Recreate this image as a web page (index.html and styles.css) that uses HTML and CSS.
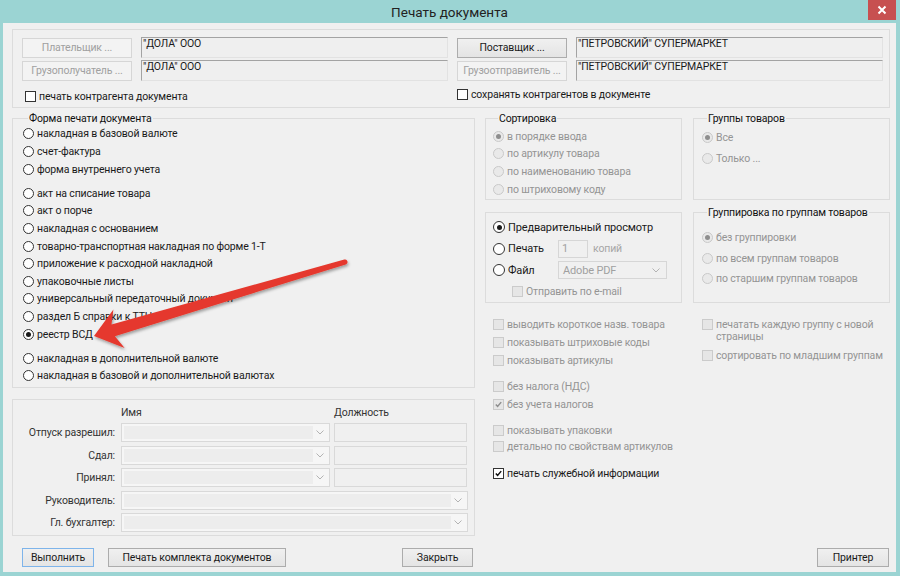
FILE: index.html
```html
<!DOCTYPE html>
<html lang="ru">
<head>
<meta charset="utf-8">
<title>Печать документа</title>
<link rel="stylesheet" href="styles.css">
</head>
<body>
<div class="window">
  <div class="titlebar">
    <span></span>
    <span class="title">Печать документа</span>
    <span class="close"><svg width="10" height="10" viewBox="0 0 10 10"><path d="M1.5 1.5 8.5 8.5M8.5 1.5 1.5 8.5"/></svg></span>
  </div>

  <div class="client">
    <div class="parties">
      <button class="btn" disabled>Плательщик ...</button>
      <div class="field">"ДОЛА" ООО</div>
      <button class="btn">Поставщик ...</button>
      <div class="field">"ПЕТРОВСКИЙ" СУПЕРМАРКЕТ</div>
      <button class="btn" disabled>Грузополучатель ...</button>
      <div class="field">"ДОЛА" ООО</div>
      <button class="btn" disabled>Грузоотправитель ...</button>
      <div class="field">"ПЕТРОВСКИЙ" СУПЕРМАРКЕТ</div>
      <label class="chk party-left"><span class="cb"></span>печать контрагента документа</label>
      <label class="chk party-right"><span class="cb"></span>сохранять контрагентов в документе</label>
    </div>

    <div class="main">
      <div class="left">
        <fieldset class="form">
          <legend>Форма печати документа</legend>
          <label class="row"><span class="rb"></span>накладная в базовой валюте</label>
          <label class="row"><span class="rb"></span>счет-фактура</label>
          <label class="row"><span class="rb"></span>форма внутреннего учета</label>
          <label class="row sep"><span class="rb"></span>акт на списание товара</label>
          <label class="row"><span class="rb"></span>акт о порче</label>
          <label class="row"><span class="rb"></span>накладная с основанием</label>
          <label class="row"><span class="rb"></span>товарно-транспортная накладная по форме 1-Т</label>
          <label class="row"><span class="rb"></span>приложение к расходной накладной</label>
          <label class="row"><span class="rb"></span>упаковочные листы</label>
          <label class="row"><span class="rb"></span>универсальный передаточный документ</label>
          <label class="row"><span class="rb"></span>раздел Б справки к ТТН</label>
          <label class="row"><span class="rb on"></span>реестр ВСД</label>
          <label class="row sep"><span class="rb"></span>накладная в дополнительной валюте</label>
          <label class="row"><span class="rb"></span>накладная в базовой и дополнительной валютах</label>
        </fieldset>

        <div class="people">
          <span></span><span class="head">Имя</span><span class="head">Должность</span>
          <span class="lbl">Отпуск разрешил:</span>
          <div class="combo"><span class="combo-in"></span><svg class="chev" viewBox="0 0 8 5"><path d="M.5 .5 4 4 7.5 .5"/></svg></div>
          <div class="edit"></div>
          <span class="lbl">Сдал:</span>
          <div class="combo"><span class="combo-in"></span><svg class="chev" viewBox="0 0 8 5"><path d="M.5 .5 4 4 7.5 .5"/></svg></div>
          <div class="edit"></div>
          <span class="lbl">Принял:</span>
          <div class="combo"><span class="combo-in"></span><svg class="chev" viewBox="0 0 8 5"><path d="M.5 .5 4 4 7.5 .5"/></svg></div>
          <div class="edit"></div>
          <span class="lbl">Руководитель:</span>
          <div class="combo wide"><span class="combo-in"></span><svg class="chev" viewBox="0 0 8 5"><path d="M.5 .5 4 4 7.5 .5"/></svg></div>
          <span class="lbl">Гл. бухгалтер:</span>
          <div class="combo wide"><span class="combo-in"></span><svg class="chev" viewBox="0 0 8 5"><path d="M.5 .5 4 4 7.5 .5"/></svg></div>
        </div>
      </div>

      <div class="right">
        <div class="pair">
          <fieldset class="sort dis">
            <legend>Сортировка</legend>
            <label class="row"><span class="rb on"></span>в порядке ввода</label>
            <label class="row"><span class="rb"></span>по артикулу товара</label>
            <label class="row"><span class="rb"></span>по наименованию товара</label>
            <label class="row"><span class="rb"></span>по штриховому коду</label>
          </fieldset>
          <fieldset class="groups dis">
            <legend>Группы товаров</legend>
            <label class="row"><span class="rb on"></span>Все</label>
            <label class="row"><span class="rb"></span>Только ...</label>
          </fieldset>
        </div>

        <div class="pair pair-out">
          <div class="output">
            <label class="row"><span class="rb on"></span>Предварительный просмотр</label>
            <div class="row"><label class="opt"><span class="rb"></span>Печать</label><span class="num">1</span><span class="dim">копий</span></div>
            <div class="row"><label class="opt"><span class="rb"></span>Файл</label><span class="select">Adobe PDF<svg class="chev" viewBox="0 0 8 5"><path d="M.5 .5 4 4 7.5 .5"/></svg></span></div>
            <label class="row dis mail"><span class="cb"></span>Отправить по e-mail</label>
          </div>
          <fieldset class="grouping dis">
            <legend>Группировка по группам товаров</legend>
            <label class="row"><span class="rb on"></span>без группировки</label>
            <label class="row"><span class="rb"></span>по всем группам товаров</label>
            <label class="row"><span class="rb"></span>по старшим группам товаров</label>
          </fieldset>
        </div>

        <div class="pair flags">
          <div class="flag-col dis">
            <label class="flag"><span class="cb"></span>выводить короткое назв. товара</label>
            <label class="flag"><span class="cb"></span>показывать штриховые коды</label>
            <label class="flag"><span class="cb"></span>показывать артикулы</label>
            <label class="flag gap8"><span class="cb"></span>без налога (НДС)</label>
            <label class="flag"><span class="cb"><svg viewBox="0 0 11 11"><path d="M2.2 5.6 4.4 7.8 8.8 2.6"/></svg></span>без учета налогов</label>
            <label class="flag short gap9"><span class="cb"></span>показывать упаковки</label>
            <label class="flag short"><span class="cb"></span>детально по свойствам артикулов</label>
            <label class="flag gap10 enabled"><span class="cb"><svg viewBox="0 0 11 11"><path d="M2.2 5.6 4.4 7.8 8.8 2.6"/></svg></span>печать служебной информации</label>
          </div>
          <div class="flag-col flag-col-right dis">
            <label class="flag two"><span class="cb"></span><span>печатать каждую группу с новой<br>страницы</span></label>
            <label class="flag"><span class="cb"></span>сортировать по младшим группам</label>
          </div>
        </div>
      </div>
    </div>

    <div class="actions">
      <div class="act-left">
        <button class="btn default">Выполнить</button>
        <button class="btn set">Печать комплекта документов</button>
        <button class="btn close-btn">Закрыть</button>
      </div>
      <div class="act-right">
        <button class="btn printer">Принтер</button>
      </div>
    </div>
  </div>

  <svg class="annot" width="900" height="576" viewBox="0 0 900 576">
    <defs>
      <filter id="shade" x="-10%" y="-10%" width="120%" height="130%">
        <feDropShadow dx="1" dy="2" stdDeviation="1.5" flood-color="#000" flood-opacity="0.35"/>
      </filter>
    </defs>
    <path d="M94 336 L113.4 309.5 L111.5 324.6 L344.3 259.6 A2.5 2.5 0 0 1 345.7 264.4 L114.9 336.2 L124.6 347.9 Z" fill="#e5392d" filter="url(#shade)"/>
  </svg>
</div>
</body>
</html>
```

FILE: styles.css
```css
* {
  box-sizing: border-box;
}
body {
  margin: 0;
  font-family: Roboto, "Liberation Sans", sans-serif;
  font-size: 10.5px;
  letter-spacing: -0.15px;
  color: #1a1a1a;
}

.window {
  position: relative;
  width: 900px;
  height: 576px;
  background: #9bd4d3;
  padding: 0 4px 4px 3px;
  display: flex;
  flex-direction: column;
}

.titlebar {
  height: 23px;
  display: grid;
  grid-template-columns: 1fr auto 1fr;
  align-items: start;
}
.title {
  font-size: 13.5px;
  letter-spacing: 0;
  line-height: 24px;
  color: #222;
}
.close {
  justify-self: end;
  width: 28px;
  height: 20px;
  background: #c75050;
  display: flex;
  align-items: center;
  justify-content: center;
}
.close svg path {
  stroke: #fff;
  stroke-width: 2;
}

.client {
  flex: 1;
  background: #f0f0f0;
  padding: 6px 6px 0 9px;
}

/* buttons */
.btn {
  height: 19px;
  padding: 0;
  border: 1px solid #acacac;
  background: linear-gradient(#f0f0f0, #e4e4e4);
  font: inherit;
  letter-spacing: inherit;
  color: #1a1a1a;
}
.btn:disabled {
  border-color: #d6d6d6;
  background: #f3f3f3;
  color: #a0a0a0;
}
.btn.default {
  border-color: #7eb4ea;
}

/* top: counterparties */
.parties {
  height: 79px;
  border: 1px solid #dcdcdc;
  padding: 7px 0 3px 9px;
  display: grid;
  grid-template-columns: 110px 307px 110px 307px;
  grid-template-rows: 21px 21px 1fr;
  column-gap: 9px;
  row-gap: 2px;
}
.parties .btn {
  height: 20px;
  align-self: center;
}
.field {
  border: 1px solid;
  border-color: #a3a3a3 #e2e2e2 #e2e2e2 #a3a3a3;
  background: #efefef;
  padding: 0 1px;
  line-height: 12px;
  white-space: nowrap;
}
.chk {
  display: flex;
  align-items: center;
  align-self: end;
  height: 15px;
}
.party-left {
  grid-column: 1 / 3;
  padding-left: 3px;
}
.party-right {
  grid-column: 3 / 5;
  margin-bottom: 2px;
}

/* radios and checkboxes */
.rb {
  position: relative;
  flex: none;
  width: 11px;
  height: 11px;
  margin-right: 3px;
  border: 1px solid #333;
  border-radius: 50%;
  background: #fff;
}
.rb.on::after {
  content: '';
  position: absolute;
  left: 2px;
  top: 2px;
  width: 5px;
  height: 5px;
  border-radius: 50%;
  background: #1a1a1a;
}
.cb {
  flex: none;
  width: 11px;
  height: 11px;
  margin-right: 3px;
  border: 1px solid #333;
  background: #fff;
}
.cb svg {
  display: block;
  width: 100%;
  height: 100%;
}
.cb svg path {
  fill: none;
  stroke: #111;
  stroke-width: 1.8;
}
.dis {
  color: #949494;
}
.dis .rb {
  border-color: #c9c9c9;
  background: #e9e9e9;
}
.dis .rb.on::after {
  background: #8e8e8e;
}
.dis .cb {
  border-color: #cbcbcb;
  background: #e6e6e6;
}
.dis .cb svg path {
  stroke: #8e8e8e;
}
.dis .enabled {
  color: #1a1a1a;
}
.dis .enabled .cb {
  border-color: #333;
  background: #fff;
}
.dis .enabled .cb svg path {
  stroke: #111;
}

/* group boxes */
fieldset {
  margin: 0;
  padding: 0;
  min-width: 0;
  border: 1px solid #dcdcdc;
}
legend {
  margin-left: 5px;
  padding: 0 1px;
  line-height: 13px;
  color: #111;
}
.row {
  display: flex;
  align-items: center;
  height: 17.6px;
  white-space: nowrap;
}
.sep {
  margin-top: 6.5px;
}

.main {
  display: grid;
  grid-template-columns: 463px 405px;
  column-gap: 10px;
  align-items: start;
  margin-top: 3.5px;
}

.form {
  padding: 0.7px 0 2.6px 10px;
}

/* people */
.people {
  margin-top: 10.5px;
  border: 1px solid #dcdcdc;
  padding: 6px 0 3px;
  display: grid;
  grid-template-columns: 104px 209px 133px;
  grid-template-rows: 14px repeat(5, 19px);
  column-gap: 4px;
  row-gap: 3.5px;
}
.head {
  color: #333;
  line-height: 14px;
}
.lbl {
  text-align: right;
  padding-right: 2px;
  line-height: 19px;
  color: #333;
}
.combo {
  display: flex;
  align-items: center;
  border: 1px solid #d9d9d9;
  background: #f6f6f6;
}
.combo.wide {
  grid-column: 2 / 4;
  margin-right: -1px;
}
.combo-in {
  align-self: stretch;
  flex: 1;
  margin: 2px 3px 2px 2px;
  background: #ededed;
}
.chev {
  flex: none;
  width: 8px;
  height: 5px;
  margin-right: 5px;
}
.chev path {
  fill: none;
  stroke: #b3b3b3;
  stroke-width: 1;
}
.edit {
  border: 1px solid #d9d9d9;
  background: #f0f0f0;
}

/* right column */
.pair {
  display: grid;
  grid-template-columns: 197px 197px;
  column-gap: 11px;
}
.sort {
  padding: 3px 0 1px 7px;
}
.groups {
  padding: 4px 0 0 8px;
}
.groups .row + .row {
  margin-top: 4px;
}
.pair-out {
  margin-top: 6.5px;
}
.output {
  margin-top: 5.5px;
  border: 1px solid #dcdcdc;
  padding: 3.5px 0 0 7px;
}
.output .row {
  height: 21.5px;
  font-size: 11px;
}
.output .rb {
  width: 12px;
  height: 12px;
}
.output .rb.on::after {
  left: 2.5px;
  top: 2.5px;
}
.output .mail {
  font-size: 10.5px;
}
.opt {
  display: flex;
  align-items: center;
  width: 65px;
}
.num {
  width: 30px;
  height: 18px;
  border: 1px solid #d6d6d6;
  background: #f0f0f0;
  padding-left: 3px;
  line-height: 16px;
  color: #a0a0a0;
}
.dim {
  margin-left: 5px;
  color: #a6a6a6;
  font-size: 10.5px;
}
.select {
  display: flex;
  align-items: center;
  width: 109px;
  height: 18px;
  border: 1px solid #d6d6d6;
  background: #f0f0f0;
  padding-left: 4px;
  color: #a0a0a0;
}
.select .chev {
  margin-left: auto;
  margin-right: 6px;
}
.mail {
  padding-left: 19px;
}
.grouping {
  padding: 8.25px 0 13px 8px;
}
.grouping .row {
  height: 20.5px;
}

.flags {
  margin-top: 12.5px;
}
.flag-col {
  padding-left: 8px;
}
.flag-col-right {
  padding: 3px 0 0 9px;
}
.flag {
  display: flex;
  align-items: center;
  height: 18px;
  white-space: nowrap;
}
.flag.short {
  height: 16px;
}
.flag.two {
  align-items: flex-start;
  height: auto;
  line-height: 12px;
}
.flag.two .cb {
  margin-top: 0.5px;
}
.flag-col-right .flag + .flag {
  margin-top: 4px;
}
.gap8 {
  margin-top: 8px;
}
.gap9 {
  margin-top: 9px;
}
.gap10 {
  margin-top: 10px;
}

/* bottom buttons */
.actions {
  display: grid;
  grid-template-columns: 463px 405px;
  column-gap: 10px;
  margin-top: 12px;
}
.act-left,
.act-right {
  display: flex;
}
.act-left .default {
  width: 72px;
  margin-left: 10px;
}
.act-left .set {
  width: 178px;
  margin-left: 14px;
}
.act-left .close-btn {
  width: 71px;
  margin-left: auto;
  margin-right: 2px;
}
.printer {
  width: 72px;
  margin-left: auto;
  margin-right: 1px;
}

/* annotation arrow drawn over the dialog */
.annot {
  position: absolute;
  left: 0;
  top: 0;
  pointer-events: none;
}
```
